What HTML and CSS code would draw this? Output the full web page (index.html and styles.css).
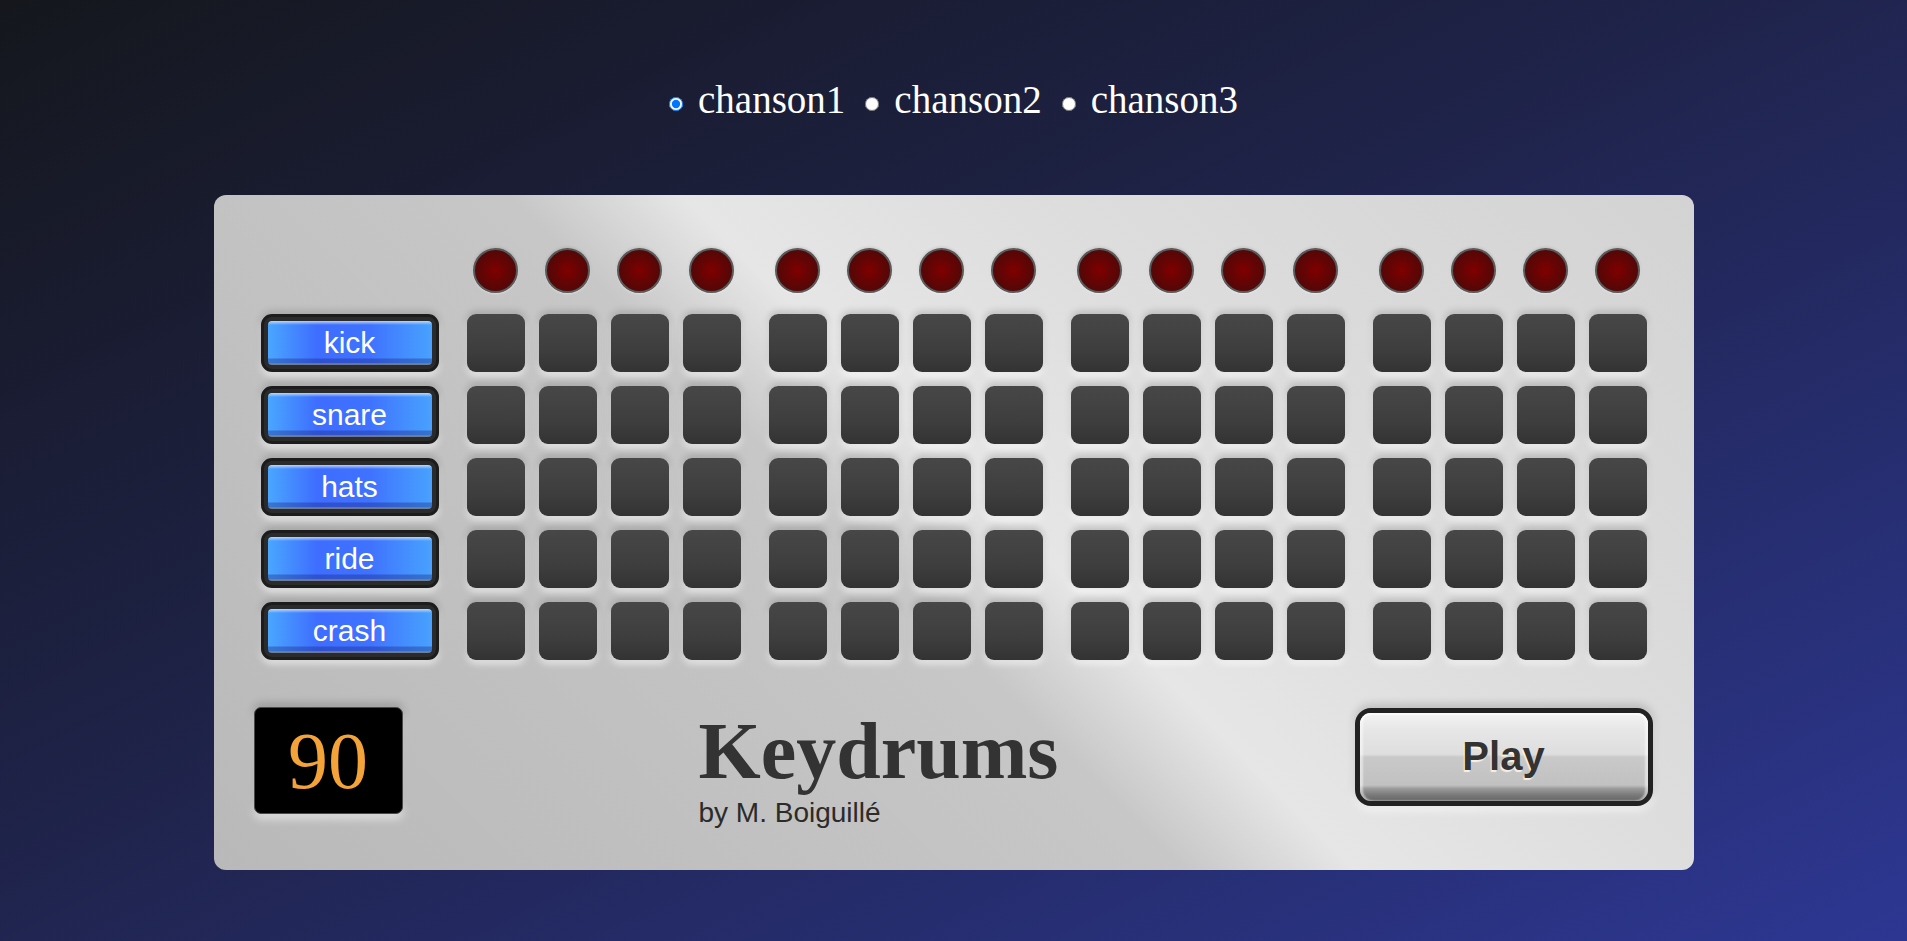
FILE: index.html
```html
<!DOCTYPE html>
<html lang="fr">
<head>
<meta charset="utf-8">
<title>Keydrums</title>
<link rel="stylesheet" href="styles.css">
</head>
<body>
<form class="songs">
  <label class="song"><input type="radio" name="song" checked><span>chanson1</span></label>
  <label class="song"><input type="radio" name="song"><span>chanson2</span></label>
  <label class="song"><input type="radio" name="song"><span>chanson3</span></label>
</form>

<main class="panel">
  <div class="seq">
    <div class="corner"></div>
    <div class="leds">
      <div class="group"><span class="slot"><i class="led"></i></span><span class="slot"><i class="led"></i></span><span class="slot"><i class="led"></i></span><span class="slot"><i class="led"></i></span></div>
      <div class="group"><span class="slot"><i class="led"></i></span><span class="slot"><i class="led"></i></span><span class="slot"><i class="led"></i></span><span class="slot"><i class="led"></i></span></div>
      <div class="group"><span class="slot"><i class="led"></i></span><span class="slot"><i class="led"></i></span><span class="slot"><i class="led"></i></span><span class="slot"><i class="led"></i></span></div>
      <div class="group"><span class="slot"><i class="led"></i></span><span class="slot"><i class="led"></i></span><span class="slot"><i class="led"></i></span><span class="slot"><i class="led"></i></span></div>
    </div>

    <button class="inst" type="button"><span class="face">kick</span></button>
    <div class="steps">
      <div class="group"><span class="pad"></span><span class="pad"></span><span class="pad"></span><span class="pad"></span></div>
      <div class="group"><span class="pad"></span><span class="pad"></span><span class="pad"></span><span class="pad"></span></div>
      <div class="group"><span class="pad"></span><span class="pad"></span><span class="pad"></span><span class="pad"></span></div>
      <div class="group"><span class="pad"></span><span class="pad"></span><span class="pad"></span><span class="pad"></span></div>
    </div>

    <button class="inst" type="button"><span class="face">snare</span></button>
    <div class="steps">
      <div class="group"><span class="pad"></span><span class="pad"></span><span class="pad"></span><span class="pad"></span></div>
      <div class="group"><span class="pad"></span><span class="pad"></span><span class="pad"></span><span class="pad"></span></div>
      <div class="group"><span class="pad"></span><span class="pad"></span><span class="pad"></span><span class="pad"></span></div>
      <div class="group"><span class="pad"></span><span class="pad"></span><span class="pad"></span><span class="pad"></span></div>
    </div>

    <button class="inst" type="button"><span class="face">hats</span></button>
    <div class="steps">
      <div class="group"><span class="pad"></span><span class="pad"></span><span class="pad"></span><span class="pad"></span></div>
      <div class="group"><span class="pad"></span><span class="pad"></span><span class="pad"></span><span class="pad"></span></div>
      <div class="group"><span class="pad"></span><span class="pad"></span><span class="pad"></span><span class="pad"></span></div>
      <div class="group"><span class="pad"></span><span class="pad"></span><span class="pad"></span><span class="pad"></span></div>
    </div>

    <button class="inst" type="button"><span class="face">ride</span></button>
    <div class="steps">
      <div class="group"><span class="pad"></span><span class="pad"></span><span class="pad"></span><span class="pad"></span></div>
      <div class="group"><span class="pad"></span><span class="pad"></span><span class="pad"></span><span class="pad"></span></div>
      <div class="group"><span class="pad"></span><span class="pad"></span><span class="pad"></span><span class="pad"></span></div>
      <div class="group"><span class="pad"></span><span class="pad"></span><span class="pad"></span><span class="pad"></span></div>
    </div>

    <button class="inst" type="button"><span class="face">crash</span></button>
    <div class="steps">
      <div class="group"><span class="pad"></span><span class="pad"></span><span class="pad"></span><span class="pad"></span></div>
      <div class="group"><span class="pad"></span><span class="pad"></span><span class="pad"></span><span class="pad"></span></div>
      <div class="group"><span class="pad"></span><span class="pad"></span><span class="pad"></span><span class="pad"></span></div>
      <div class="group"><span class="pad"></span><span class="pad"></span><span class="pad"></span><span class="pad"></span></div>
    </div>
  </div>

  <div class="bottom">
    <div class="bpm">90</div>
    <div class="title">
      <h1>Keydrums</h1>
      <p>by M. Boiguillé</p>
    </div>
    <button class="play" type="button"><span class="play-face">Play</span></button>
  </div>
</main>
</body>
</html>
```

FILE: styles.css
```css
html, body {
  margin: 0;
  padding: 0;
  height: 100%;
}

body {
  min-height: 941px;
  background: linear-gradient(to bottom right, #15171d 0%, #1e2246 42%, #2d3792 100%);
  font-family: "Liberation Serif", "Times New Roman", serif;
  overflow: hidden;
}

/* song selector */
.songs {
  display: flex;
  justify-content: center;
  padding-top: 78px;
  height: 44px;
  margin: 0;
}

.song {
  display: flex;
  align-items: flex-start;
  margin: 0 10px;
  color: #ffffff;
  font-family: "Liberation Serif", "Times New Roman", serif;
  font-size: 39px;
  line-height: 44px;
  cursor: pointer;
}

.song input {
  width: 14px;
  height: 14px;
  margin: 19px 15px 0 0;
}

/* main panel */
.panel {
  width: 1480px;
  box-sizing: border-box;
  margin: 73px auto 0;
  padding: 53px 47px 42px;
  border-radius: 12px;
  background: linear-gradient(45deg,
    #b9b9b9 0%,
    #c2c2c2 30%,
    #c7c7c7 45%,
    #e6e6e6 53%,
    #dedede 68%,
    #d3d3d3 100%);
}

.seq {
  display: grid;
  grid-template-columns: 178px auto;
  column-gap: 28px;
  row-gap: 14px;
}

.leds,
.steps {
  display: flex;
  gap: 28px;
}

.leds {
  height: 45px;
  margin-bottom: 7px;
}

.group {
  display: flex;
  gap: 14px;
}

.slot {
  width: 58px;
  display: flex;
  justify-content: center;
}

.led {
  display: block;
  width: 45px;
  height: 45px;
  box-sizing: border-box;
  border-radius: 50%;
  border: 2px solid #5a5a5a;
  background: radial-gradient(circle at 50% 50%, #800000 0%, #650404 40%, #420b0b 100%);
  box-shadow: 0 1px 2px rgba(255, 255, 255, 0.5), 0 -1px 3px rgba(0, 0, 0, 0.12);
}

.pad {
  display: block;
  width: 58px;
  height: 58px;
  border-radius: 9px;
  background: linear-gradient(to bottom, #474747 0%, #3e3e3e 60%, #333333 100%);
  box-shadow: 0 -3px 7px rgba(0, 0, 0, 0.16), 0 4px 7px rgba(255, 255, 255, 0.6);
}

/* instrument buttons */
.inst {
  width: 178px;
  height: 58px;
  box-sizing: border-box;
  margin: 0;
  padding: 4px;
  border: 3px solid #1c1c1c;
  border-radius: 11px;
  background: #2b2b2b;
  box-shadow: 0 -3px 7px rgba(0, 0, 0, 0.16), 0 4px 7px rgba(255, 255, 255, 0.6);
  cursor: pointer;
}

.face {
  display: block;
  height: 100%;
  border-radius: 4px;
  background:
    linear-gradient(to bottom,
      rgba(220, 235, 255, 0.75) 0px,
      rgba(200, 225, 255, 0.45) 2px,
      rgba(255, 255, 255, 0) 4px,
      rgba(255, 255, 255, 0) calc(100% - 7px),
      rgba(20, 30, 120, 0.35) calc(100% - 6px),
      rgba(20, 30, 120, 0.35) calc(100% - 2px),
      rgba(120, 120, 120, 0.8) calc(100% - 2px)),
    linear-gradient(to right, #4aa6ff 0%, #3e6dff 30%, #3f72ff 62%, #48a2ff 100%);
  color: #ffffff;
  font-family: "Liberation Sans", Arial, sans-serif;
  font-size: 30px;
  line-height: 44px;
  text-align: center;
}

/* bottom row */
.bottom {
  display: flex;
  justify-content: space-between;
  align-items: flex-start;
  margin: 47px -6px 0 -7px;
}

.bpm {
  width: 149px;
  height: 107px;
  box-sizing: border-box;
  border: 1px solid #4a4a4a;
  border-radius: 7px;
  background: #000000;
  color: #f4a338;
  font-family: "Liberation Serif", "Times New Roman", serif;
  font-size: 80px;
  line-height: 107px;
  text-align: center;
  box-shadow: 0 -4px 9px rgba(0, 0, 0, 0.18), 0 5px 9px rgba(255, 255, 255, 0.55);
}

.title {
  margin-top: -2px;
}

.title h1 {
  margin: 0;
  color: #333333;
  font-family: "Liberation Serif", "Times New Roman", serif;
  font-weight: bold;
  font-size: 80px;
  line-height: 92px;
}

.title p {
  margin: 0;
  color: #2b2b2b;
  font-family: "Liberation Sans", Arial, sans-serif;
  font-size: 28px;
  line-height: 31px;
}

.play {
  width: 298px;
  height: 98px;
  margin: 1px 0 0;
  padding: 0;
  box-sizing: border-box;
  border: 5px solid #222222;
  border-radius: 16px;
  background: #232323;
  box-shadow: 0 -4px 9px rgba(0, 0, 0, 0.16), 0 5px 9px rgba(255, 255, 255, 0.55);
  cursor: pointer;
}

.play-face {
  display: block;
  height: 100%;
  border-radius: 11px;
  background: linear-gradient(to bottom,
    #f4f4f4 0%,
    #e6e6e6 20%,
    #dedede 47%,
    #c9c9c9 50%,
    #c1c1c1 82%,
    #9a9a9a 86%,
    #7a7a7a 93%,
    #666666 100%);
  box-shadow: inset 0 2px 0 #fbfbfb, inset 3px 0 2px rgba(255, 255, 255, 0.5), inset -3px 0 2px rgba(255, 255, 255, 0.5);
  color: #333333;
  font-family: "Liberation Sans", Arial, sans-serif;
  font-weight: bold;
  font-size: 40px;
  line-height: 86px;
  text-align: center;
  text-shadow: -1px 2px 1px rgba(255, 245, 230, 0.9);
}
```
